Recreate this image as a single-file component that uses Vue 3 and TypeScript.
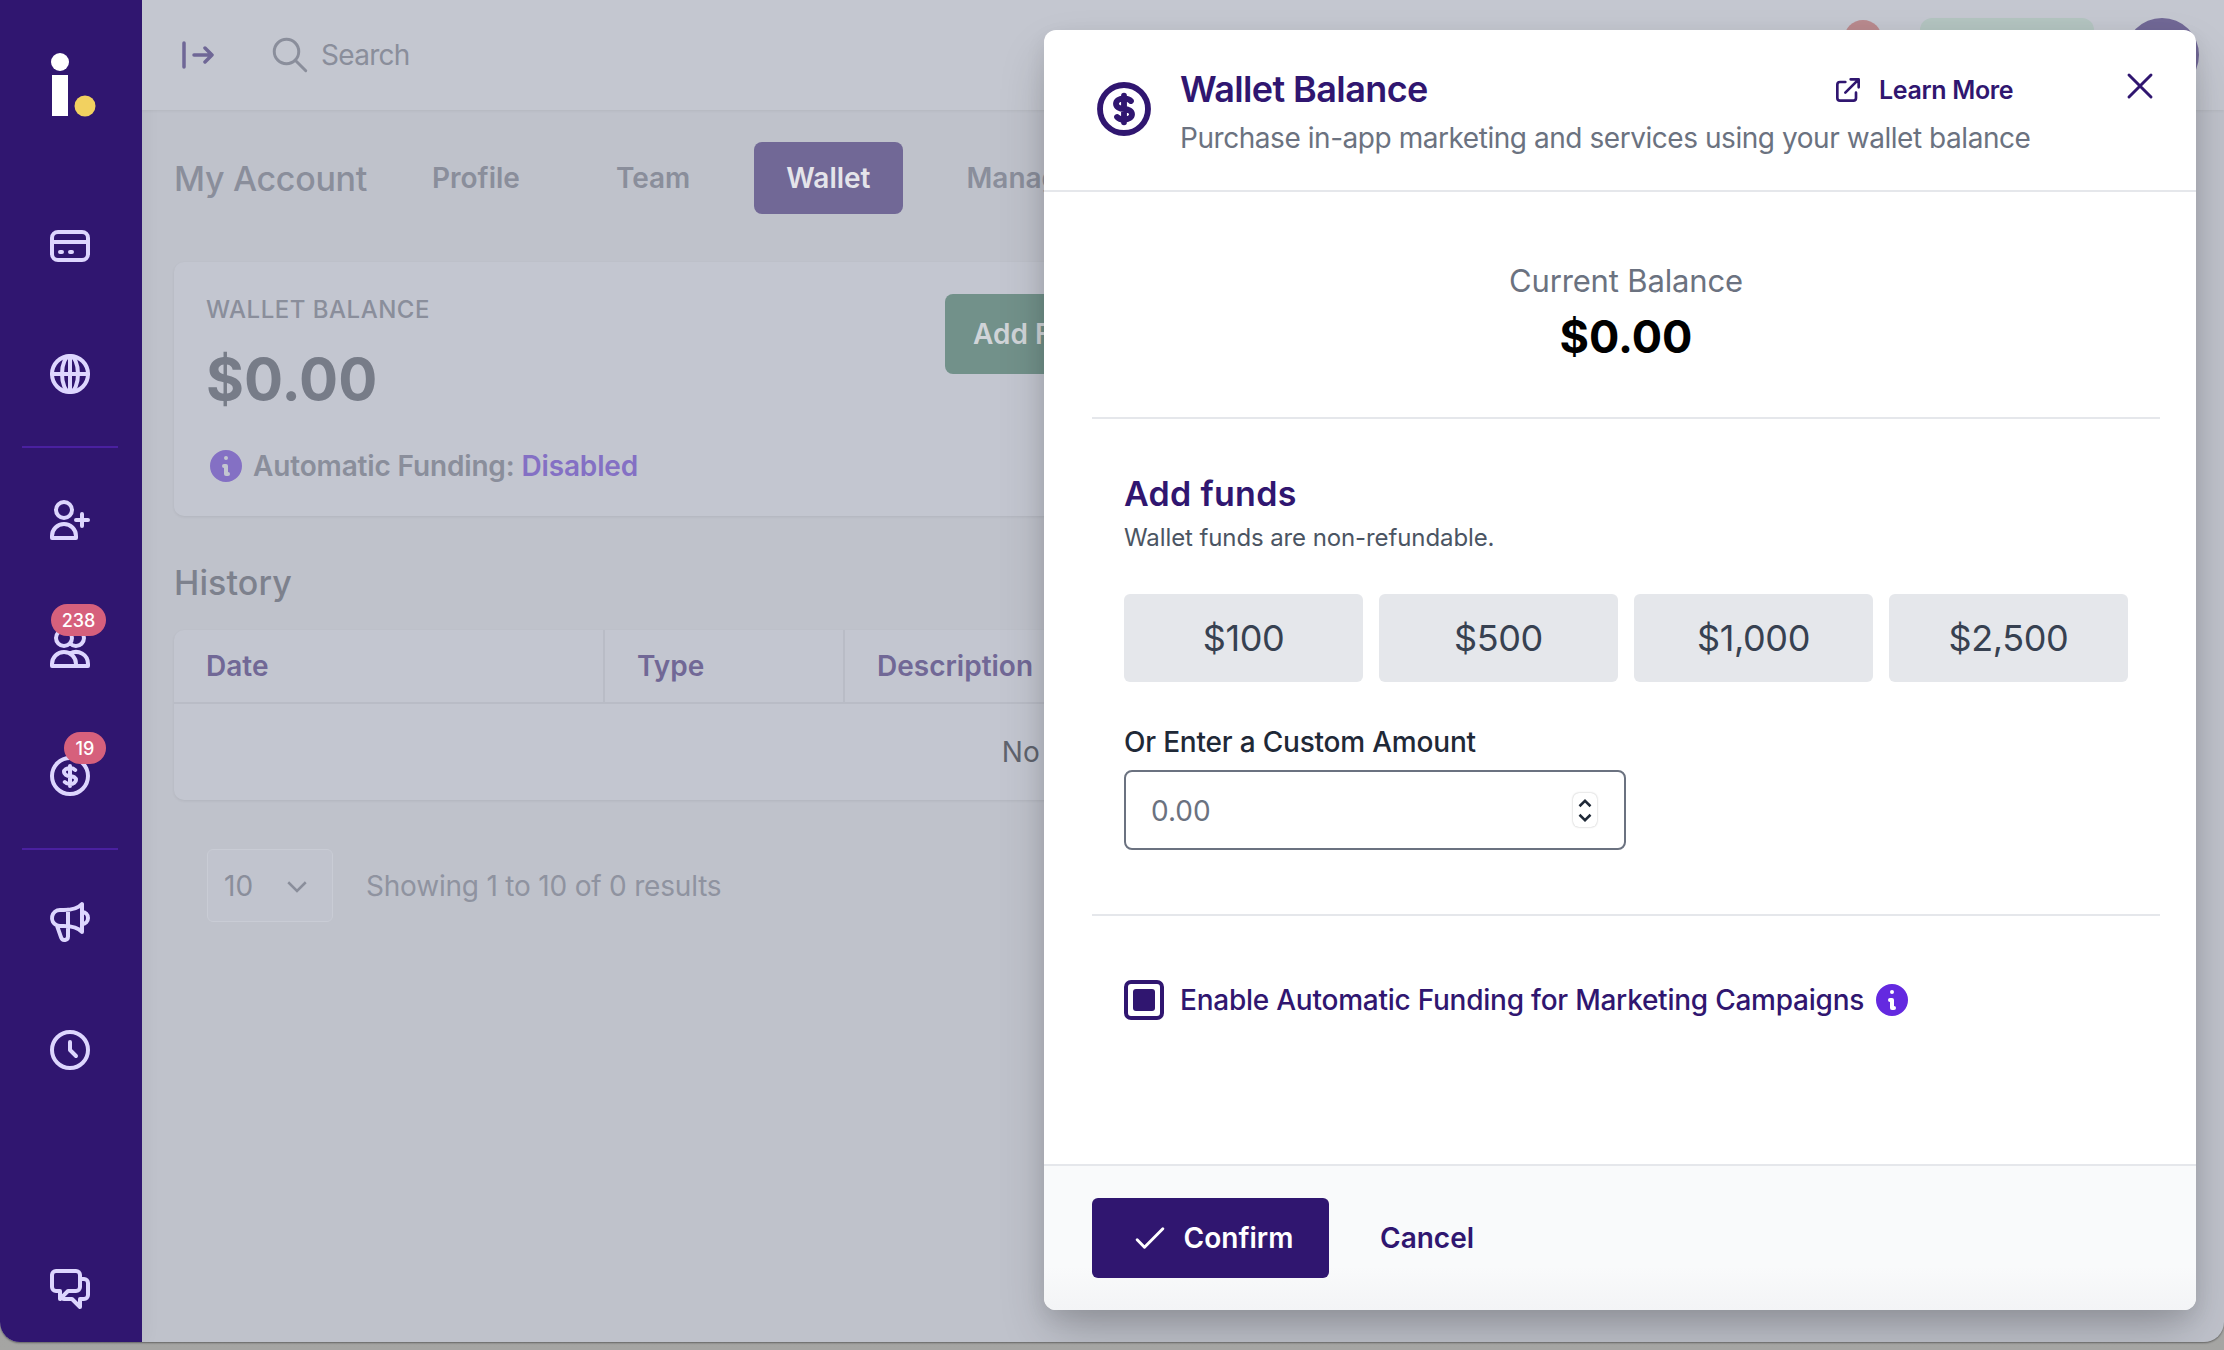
<template>
  <div class="desktop">
    <div class="window">
      <aside class="sidebar">
        <svg class="logo" viewBox="0 0 58 66" width="58" height="66">
          <circle cx="18" cy="9" r="9" fill="#fff" />
          <rect x="10" y="22" width="16" height="41" fill="#fff" />
          <circle cx="43" cy="53" r="10.5" fill="#f2d160" />
        </svg>

        <div class="nav-group first">
          <div class="nav-item">
            <svg viewBox="0 0 24 24"><path :d="icons.card" /></svg>
          </div>
          <div class="nav-item">
            <svg viewBox="0 0 24 24">
              <circle cx="12" cy="12" r="9" />
              <ellipse cx="12" cy="12" rx="4" ry="9" />
              <path d="M3 12h18M12 3v18" />
            </svg>
          </div>
        </div>
        <div class="nav-divider"></div>
        <div class="nav-group">
          <div class="nav-item">
            <svg viewBox="0 0 24 24"><path :d="icons.userAdd" /></svg>
          </div>
          <div class="nav-item">
            <svg viewBox="0 0 24 24"><path :d="icons.users" /></svg>
            <span class="nav-badge wide">238</span>
          </div>
          <div class="nav-item">
            <svg viewBox="0 0 24 24"><path :d="icons.dollar" /></svg>
            <span class="nav-badge">19</span>
          </div>
        </div>
        <div class="nav-divider"></div>
        <div class="nav-group">
          <div class="nav-item">
            <svg viewBox="0 0 24 24"><path :d="icons.megaphone" /></svg>
          </div>
          <div class="nav-item">
            <svg viewBox="0 0 24 24"><path :d="icons.clock" /></svg>
          </div>
        </div>
        <div class="nav-item chat">
          <svg viewBox="0 0 24 24"><path :d="icons.chat" /></svg>
        </div>
      </aside>

      <div class="content">
        <header class="topbar">
          <svg class="collapse-icon" viewBox="0 0 32 28">
            <path d="M2 2v24M12 14h18M23 7l7 7-7 7" />
          </svg>
          <svg class="search-icon" viewBox="0 0 24 24">
            <path d="M21 21l-6-6m2-5a7 7 0 11-14 0 7 7 0 0114 0z" />
          </svg>
          <span class="search-text">Search</span>
          <div class="topbar-right">
            <span class="bell-badge"></span>
            <span class="upgrade-btn"></span>
            <span class="avatar"></span>
          </div>
        </header>

        <main class="page">
          <div class="tabs-row">
            <h1>My Account</h1>
            <nav class="tabs">
              <a v-for="tab in tabs" :key="tab" class="tab" :class="{ active: tab === 'Wallet' }">{{ tab }}</a>
            </nav>
          </div>

          <section class="balance-card">
            <div class="balance-info">
              <div class="balance-label">WALLET BALANCE</div>
              <div class="balance-value">$0.00</div>
              <div class="funding-row">
                <svg class="info-icon" viewBox="0 0 20 20"><path fill-rule="evenodd" clip-rule="evenodd" :d="icons.info" /></svg>
                <span>Automatic Funding: <em>Disabled</em></span>
              </div>
            </div>
            <button class="add-btn">Add Funds</button>
          </section>

          <h2 class="history-title">History</h2>
          <section class="history-table">
            <div class="table-head">
              <div class="col date">Date</div>
              <div class="col type">Type</div>
              <div class="col desc">Description</div>
            </div>
            <div class="table-empty">No transactions to display</div>
          </section>

          <div class="pager">
            <div class="page-size">
              <span>10</span>
              <svg viewBox="0 0 24 24"><path d="M5 9l7 7 7-7" /></svg>
            </div>
            <span class="showing">Showing 1 to 10 of 0 results</span>
          </div>
        </main>
      </div>

      <div class="modal">
        <header class="modal-head">
          <svg class="head-icon" viewBox="0 0 24 24"><path :d="icons.dollar" /></svg>
          <div class="head-text">
            <h2>Wallet Balance</h2>
            <p>Purchase in-app marketing and services using your wallet balance</p>
          </div>
          <a class="learn-more">
            <svg viewBox="0 0 24 24"><path d="M10 6H6a2 2 0 00-2 2v10a2 2 0 002 2h10a2 2 0 002-2v-4M14 4h6m0 0v6m0-6L10 14" /></svg>
            Learn More
          </a>
          <svg class="close-icon" viewBox="0 0 24 24"><path d="M6 18L18 6M6 6l12 12" /></svg>
        </header>

        <div class="modal-body">
          <section class="current">
            <div class="current-label">Current Balance</div>
            <div class="current-value">$0.00</div>
          </section>

          <section class="funds">
            <h3>Add funds</h3>
            <p>Wallet funds are non-refundable.</p>
            <div class="amounts">
              <button v-for="amount in amounts" :key="amount" class="amount">{{ amount }}</button>
            </div>
            <label class="custom-label">Or Enter a Custom Amount</label>
            <div class="custom-input">
              <input type="text" placeholder="0.00" />
              <div class="spinner">
                <svg viewBox="0 0 12 8"><path d="M2 6l4-4 4 4" /></svg>
                <svg viewBox="0 0 12 8"><path d="M2 2l4 4 4-4" /></svg>
              </div>
            </div>
          </section>

          <section class="auto-row">
            <span class="checkbox"><i></i></span>
            <span class="auto-text">Enable Automatic Funding for Marketing Campaigns</span>
            <svg class="info-icon bright" viewBox="0 0 20 20"><path fill-rule="evenodd" clip-rule="evenodd" :d="icons.info" /></svg>
          </section>
        </div>

        <footer class="modal-foot">
          <button class="confirm">
            <svg viewBox="0 0 24 24"><path d="M5 13l4 4L19 7" /></svg>
            Confirm
          </button>
          <button class="cancel">Cancel</button>
        </footer>
      </div>
    </div>
  </div>
</template>

<script setup lang="ts">
const tabs = ['Profile', 'Team', 'Wallet', 'Manage']
const amounts = ['$100', '$500', '$1,000', '$2,500']

// heroicons outline paths, info is the solid variant
const icons = {
  card: 'M3 10h18M7 15h1m4 0h1m-7 4h12a3 3 0 003-3V8a3 3 0 00-3-3H6a3 3 0 00-3 3v8a3 3 0 003 3z',
  userAdd: 'M18 9v3m0 0v3m0-3h3m-3 0h-3m-2-5a4 4 0 11-8 0 4 4 0 018 0zM3 20a6 6 0 0112 0v1H3v-1z',
  users: 'M12 4.354a4 4 0 110 5.292M15 21H3v-1a6 6 0 0112 0v1zm0 0h6v-1a6 6 0 00-9-5.197M13 7a4 4 0 11-8 0 4 4 0 018 0z',
  dollar: 'M12 8c-1.657 0-3 .895-3 2s1.343 2 3 2 3 .895 3 2-1.343 2-3 2m0-8c1.11 0 2.08.402 2.599 1M12 8V7m0 1v8m0 0v1m0-1c-1.11 0-2.08-.402-2.599-1M21 12a9 9 0 11-18 0 9 9 0 0118 0z',
  megaphone: 'M11 5.882V19.24a1.76 1.76 0 01-3.417.592l-2.147-6.15M18 13a3 3 0 100-6M5.436 13.683A4.001 4.001 0 017 6h1.832c4.1 0 7.625-1.234 9.168-3v14c-1.543-1.766-5.067-3-9.168-3H7a3.988 3.988 0 01-1.564-.317z',
  clock: 'M12 8v4l3 3m6-3a9 9 0 11-18 0 9 9 0 0118 0z',
  chat: 'M17 8h2a2 2 0 012 2v6a2 2 0 01-2 2h-2v4l-4-4H9a1.994 1.994 0 01-1.414-.586m0 0L11 14h4a2 2 0 002-2V6a2 2 0 00-2-2H5a2 2 0 00-2 2v6a2 2 0 002 2h2v4l.586-.586z',
  info: 'M18 10a8 8 0 11-16 0 8 8 0 0116 0zm-7-4a1 1 0 11-2 0 1 1 0 012 0zM9 9a1 1 0 000 2v3a1 1 0 001 1h1a1 1 0 100-2v-3a1 1 0 00-1-1H9z'
}
</script>

<style>
body {
  margin: 0;
  background: #9d9d9b;
}
</style>

<style scoped>
.desktop {
  width: 2224px;
  height: 1350px;
  overflow: hidden;
  background: linear-gradient(#8f8f8d, #a5a5a3);
  font-family: Inter, "Liberation Sans", sans-serif;
  color: #6f7480;
}

.window {
  position: relative;
  display: flex;
  height: 1342px;
  overflow: hidden;
  border-radius: 0 0 20px 20px;
  background: #bfc2cb;
  box-shadow: 0 1px 2px rgba(0, 0, 0, 0.4);
}

/* Sidebar */
.sidebar {
  display: flex;
  flex-direction: column;
  align-items: center;
  flex: none;
  box-sizing: border-box;
  width: 142px;
  padding: 53px 2px 31px 0;
  background: #301670;
  box-shadow: 4px 0 16px rgba(0, 0, 0, 0.04);
}

.logo {
  flex: none;
  margin: 0 -2px 103px 0;
}

.nav-group {
  display: flex;
  flex-direction: column;
  gap: 80px;
}

.nav-divider {
  flex: none;
  width: 96px;
  height: 2px;
  margin: 48px 0;
  background: #4a20a0;
}

.nav-item {
  position: relative;
  width: 48px;
  height: 48px;
}

.nav-item svg {
  display: block;
  width: 48px;
  height: 48px;
  fill: none;
  stroke: #ddd6fe;
  stroke-width: 2;
  stroke-linecap: round;
  stroke-linejoin: round;
}

.chat {
  margin-top: auto;
}

.nav-badge {
  position: absolute;
  top: -20px;
  left: 18px;
  display: flex;
  align-items: center;
  justify-content: center;
  width: 42px;
  height: 32px;
  border-radius: 16px;
  background: #d6607c;
  color: #fff;
  font-size: 18px;
  font-weight: 500;
}

.nav-badge.wide {
  left: 5px;
  width: 55px;
}

/* Page behind the modal */
.content {
  flex: 1;
  min-width: 0;
}

.topbar {
  display: flex;
  align-items: center;
  box-sizing: border-box;
  height: 110px;
  padding: 0 25px 0 40px;
  background: #c4c7d0;
  box-shadow: 0 1px 3px rgba(0, 0, 0, 0.06);
}

.collapse-icon {
  width: 32px;
  height: 28px;
  fill: none;
  stroke: #6f6796;
  stroke-width: 3.5;
  stroke-linecap: round;
  stroke-linejoin: round;
}

.search-icon {
  width: 42px;
  height: 42px;
  margin-left: 55px;
  fill: none;
  stroke: #8a8e9b;
  stroke-width: 1.7;
  stroke-linecap: round;
  stroke-linejoin: round;
}

.search-text {
  margin-left: 10px;
  font-size: 28px;
  letter-spacing: -0.7px;
  color: #8a8e9b;
}

.topbar-right {
  display: flex;
  align-items: center;
  margin-left: auto;
}

.bell-badge {
  width: 38px;
  height: 70px;
  border-radius: 19px;
  background: #b98a8e;
}

.upgrade-btn {
  width: 174px;
  height: 74px;
  margin-left: 38px;
  border-radius: 12px;
  background: #b3c4c0;
}

.avatar {
  width: 74px;
  height: 74px;
  margin-left: 31px;
  border-radius: 50%;
  background: #716896;
}

.page {
  padding: 32px 34px 0 32px;
}

.tabs-row {
  display: flex;
  align-items: center;
}

.tabs-row h1 {
  width: 226px;
  margin: 0;
  font-size: 34px;
  font-weight: 500;
  letter-spacing: -0.3px;
  color: #8a8e9b;
  white-space: nowrap;
}

.tabs {
  display: flex;
  gap: 32px;
}

.tab {
  padding: 0 32px;
  height: 72px;
  line-height: 72px;
  border-radius: 8px;
  font-size: 28px;
  font-weight: 600;
  color: #8a8e9b;
}

.tab.active {
  background: #716896;
  color: #e4e4ea;
}

.balance-card {
  display: flex;
  align-items: flex-start;
  box-sizing: border-box;
  height: 254px;
  margin-top: 48px;
  padding: 31px 32px 0;
  border-radius: 10px;
  background: #c3c6d0;
  box-shadow: 0 1px 3px rgba(0, 0, 0, 0.07);
}

.balance-info {
  flex: none;
  width: 739px;
}

.balance-label {
  height: 34px;
  line-height: 34px;
  font-size: 24px;
  font-weight: 500;
  letter-spacing: 0.5px;
  color: #8a8e9b;
}

.balance-value {
  height: 72px;
  margin-top: 16px;
  line-height: 72px;
  font-size: 58px;
  font-weight: 700;
  color: #777c88;
}

.funding-row {
  display: flex;
  align-items: center;
  gap: 7px;
  height: 34px;
  margin-top: 34px;
  font-size: 28px;
  font-weight: 600;
  letter-spacing: -0.15px;
  color: #8a8e9b;
}

.funding-row em {
  font-style: normal;
  color: #8470c4;
}

.info-icon {
  flex: none;
  width: 40px;
  height: 40px;
  fill: #8470c4;
}

.info-icon.bright {
  fill: #6429e0;
}

.add-btn {
  width: 220px;
  height: 80px;
  margin-top: 1px;
  padding: 0 0 0 28px;
  border: none;
  border-radius: 8px;
  background: #72918a;
  color: #d0d4d8;
  font: 600 28px Inter, "Liberation Sans", sans-serif;
  text-align: left;
}

.history-title {
  height: 44px;
  margin: 45px 0 0;
  line-height: 44px;
  font-size: 34px;
  font-weight: 500;
  letter-spacing: 0.1px;
  color: #7d818d;
}

.history-table {
  margin-top: 25px;
  border-radius: 10px;
  background: #c3c6d0;
  box-shadow: 0 1px 3px rgba(0, 0, 0, 0.07);
}

.table-head {
  display: flex;
  height: 74px;
  box-sizing: border-box;
  border-bottom: 2px solid #b9bcc6;
}

.col {
  box-sizing: border-box;
  padding-left: 32px;
  line-height: 72px;
  font-size: 28px;
  font-weight: 600;
  color: #716896;
}

.col.date {
  width: 429px;
}

.col.type {
  width: 240px;
  border-left: 2px solid #b9bcc6;
}

.col.desc {
  flex: 1;
  border-left: 2px solid #b9bcc6;
}

.table-empty {
  height: 96px;
  padding-right: 17px;
  line-height: 96px;
  text-align: center;
  font-size: 28px;
  color: #5f636d;
}

.pager {
  display: flex;
  align-items: center;
  gap: 33px;
  margin: 49px 0 0 33px;
}

.page-size {
  display: flex;
  align-items: center;
  justify-content: space-between;
  box-sizing: border-box;
  width: 126px;
  height: 73px;
  padding: 0 20px 0 16px;
  border: 1px solid #c9ccd5;
  border-radius: 6px;
  background: #c1c4ce;
  font-size: 28px;
  color: #8a8e9b;
}

.page-size svg {
  width: 30px;
  height: 30px;
  fill: none;
  stroke: #8a8e9b;
  stroke-width: 2;
}

.showing {
  font-size: 28px;
  letter-spacing: -0.2px;
  color: #8f93a0;
}

/* Modal */
.modal {
  position: absolute;
  top: 30px;
  left: 1044px;
  display: flex;
  flex-direction: column;
  width: 1152px;
  height: 1280px;
  overflow: hidden;
  border-radius: 12px;
  background: #fff;
  box-shadow: 0 24px 50px -6px rgba(0, 0, 0, 0.22), 0 8px 20px rgba(0, 0, 0, 0.08);
}

.modal-head {
  display: flex;
  flex: none;
  box-sizing: border-box;
  height: 162px;
  padding: 0 44px 0 48px;
  border-bottom: 2px solid #e5e7eb;
}

.head-icon {
  flex: none;
  width: 64px;
  height: 64px;
  margin: 47px 0 0 0;
  fill: none;
  stroke: #301670;
  stroke-width: 2.2;
  stroke-linecap: round;
  stroke-linejoin: round;
}

.head-text {
  margin-left: 24px;
  padding-top: 37px;
}

.head-text h2 {
  height: 44px;
  margin: 0;
  line-height: 44px;
  font-size: 36px;
  font-weight: 600;
  letter-spacing: -0.6px;
  color: #301670;
}

.head-text p {
  height: 36px;
  margin: 9px 0 0;
  line-height: 36px;
  font-size: 28px;
  letter-spacing: -0.45px;
  color: #6b7280;
  white-space: nowrap;
}

.learn-more {
  position: absolute;
  top: 42px;
  left: 788px;
  display: flex;
  align-items: center;
  gap: 15px;
  height: 36px;
  font-size: 25px;
  font-weight: 600;
  letter-spacing: -0.35px;
  color: #301670;
}

.learn-more svg {
  width: 32px;
  height: 32px;
  fill: none;
  stroke: #301670;
  stroke-width: 2;
  stroke-linecap: round;
  stroke-linejoin: round;
}

.close-icon {
  position: absolute;
  top: 34px;
  left: 1074px;
  width: 44px;
  height: 44px;
  fill: none;
  stroke: #301670;
  stroke-width: 1.6;
  stroke-linecap: round;
  stroke-linejoin: round;
}

.modal-body {
  flex: 1;
  min-height: 0;
  padding: 0 36px 0 48px;
}

.current {
  box-sizing: border-box;
  height: 227px;
  padding-top: 67px;
  border-bottom: 2px solid #e5e7eb;
  text-align: center;
}

.current-label {
  height: 44px;
  line-height: 44px;
  font-size: 31px;
  letter-spacing: -0.15px;
  color: #6b7280;
}

.current-value {
  height: 56px;
  margin-top: 6px;
  line-height: 56px;
  font-size: 45px;
  font-weight: 700;
  color: #000;
}

.funds {
  box-sizing: border-box;
  height: 497px;
  padding: 51px 0 0 32px;
  border-bottom: 2px solid #e5e7eb;
}

.funds h3 {
  height: 48px;
  margin: 0;
  line-height: 48px;
  font-size: 34px;
  font-weight: 600;
  letter-spacing: 0.3px;
  color: #301670;
}

.funds p {
  height: 32px;
  margin: 4px 0 0;
  line-height: 32px;
  font-size: 24px;
  letter-spacing: -0.1px;
  color: #4b5563;
}

.amounts {
  display: flex;
  gap: 16px;
  margin-top: 40px;
}

.amount {
  width: 239px;
  height: 88px;
  border: none;
  border-radius: 6px;
  background: #e5e7eb;
  color: #374151;
  font: 400 36px Inter, "Liberation Sans", sans-serif;
  letter-spacing: -0.4px;
}

.custom-label {
  display: block;
  height: 36px;
  margin-top: 42px;
  line-height: 36px;
  font-size: 28px;
  font-weight: 500;
  letter-spacing: -0.2px;
  color: #1f2937;
}

.custom-input {
  display: flex;
  align-items: center;
  box-sizing: border-box;
  width: 502px;
  height: 80px;
  margin-top: 10px;
  padding: 0 25px;
  border: 2px solid #6b7280;
  border-radius: 8px;
}

.custom-input input {
  flex: 1;
  min-width: 0;
  padding: 2px 0 0;
  border: none;
  outline: none;
  font: 400 28px Inter, "Liberation Sans", sans-serif;
}

.custom-input input::placeholder {
  color: #6b7280;
  opacity: 1;
}

.spinner {
  display: flex;
  flex-direction: column;
  justify-content: center;
  gap: 3px;
  width: 24px;
  height: 34px;
  margin-right: 2px;
  border-radius: 6px;
  box-shadow: 0 0 2px rgba(0, 0, 0, 0.3);
}

.spinner svg {
  display: block;
  height: 11px;
  fill: none;
  stroke: #1f2937;
  stroke-width: 1.8;
}

.auto-row {
  display: flex;
  align-items: center;
  padding: 64px 0 0 32px;
}

.checkbox {
  display: flex;
  align-items: center;
  justify-content: center;
  flex: none;
  box-sizing: border-box;
  width: 40px;
  height: 40px;
  border: 4px solid #301670;
  border-radius: 7px;
}

.checkbox i {
  display: block;
  width: 22px;
  height: 22px;
  border-radius: 3px;
  background: #301670;
}

.auto-text {
  margin-left: 16px;
  font-size: 28px;
  font-weight: 500;
  letter-spacing: -0.24px;
  color: #301670;
  white-space: nowrap;
}

.auto-row .info-icon {
  margin-left: 8px;
}

.modal-foot {
  display: flex;
  align-items: center;
  flex: none;
  box-sizing: border-box;
  height: 146px;
  padding: 0 48px;
  border-top: 2px solid #e5e7eb;
  background: linear-gradient(#f9fafb 70%, #f3f4f6);
}

.confirm {
  display: flex;
  align-items: center;
  justify-content: center;
  gap: 12px;
  width: 237px;
  height: 80px;
  border: none;
  border-radius: 6px;
  background: #301670;
  color: #fff;
  font: 600 28px Inter, "Liberation Sans", sans-serif;
}

.confirm svg {
  width: 44px;
  height: 44px;
  fill: none;
  stroke: #fff;
  stroke-width: 1.6;
  stroke-linecap: round;
  stroke-linejoin: round;
}

.cancel {
  margin-left: 51px;
  padding: 0;
  border: none;
  background: none;
  color: #301670;
  font: 600 28px Inter, "Liberation Sans", sans-serif;
}
</style>
